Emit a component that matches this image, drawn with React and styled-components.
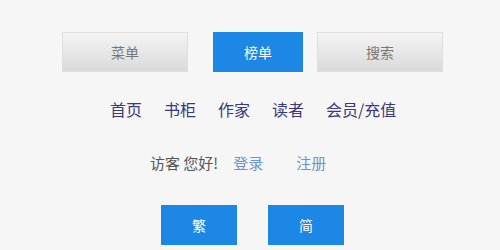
import React from 'react';
import styled, { createGlobalStyle } from 'styled-components';

const GlobalStyle = createGlobalStyle`
  html, body {
    margin: 0;
    padding: 0;
    background: #f6f6f6;
  }
  body {
    font-family: 'Noto Sans CJK SC', 'Noto Sans', sans-serif;
  }
`;

const Page = styled.div`
  width: 500px;
  height: 250px;
  overflow: hidden;
  background: #f6f6f6;
  display: flex;
  flex-direction: column;
`;

const TopBar = styled.div`
  display: flex;
  padding: 32px 0 0 62px;
  height: 40px;
`;

const TabButton = styled.div`
  box-sizing: border-box;
  width: ${({ $w }) => $w}px;
  height: 40px;
  margin-right: ${({ $gap }) => $gap || 0}px;
  display: flex;
  align-items: center;
  justify-content: center;
  font-size: 14px;
  color: ${({ $active }) => ($active ? '#ffffff' : '#777777')};
  background: ${({ $active }) =>
    $active ? '#1d87e6' : 'linear-gradient(#f4f4f4, #dadada)'};
  border: 1px solid ${({ $active }) => ($active ? '#1d87e6' : '#dedede')};
`;

const Nav = styled.nav`
  display: flex;
  gap: 22px;
  padding: 26px 0 0 110px;
  height: 22px;
  align-items: center;
`;

const NavLink = styled.a`
  font-size: 16px;
  color: #38387e;
  text-decoration: none;
  line-height: 22px;
`;

const UserRow = styled.div`
  display: flex;
  align-items: center;
  padding: 31px 0 0 150px;
  height: 22px;
  font-size: 15px;
  color: #555555;
`;

const Greeting = styled.span`
  margin-right: 15px;
`;

const UserLink = styled.a`
  color: #6a94cb;
  text-decoration: none;
  margin-right: ${({ $gap }) => $gap || 0}px;
`;

const LangBar = styled.div`
  display: flex;
  gap: 31px;
  padding: 32px 0 0 161px;
`;

const LangButton = styled.div`
  width: 76px;
  height: 40px;
  background: #1d87e6;
  color: #ffffff;
  font-size: 14px;
  display: flex;
  align-items: center;
  justify-content: center;
`;

export default function App() {
  return (
    <>
      <GlobalStyle />
      <Page>
        <TopBar>
          <TabButton $w={126} $gap={25}>菜单</TabButton>
          <TabButton $w={90} $gap={14} $active>榜单</TabButton>
          <TabButton $w={126}>搜索</TabButton>
        </TopBar>
        <Nav>
          <NavLink href="#">首页</NavLink>
          <NavLink href="#">书柜</NavLink>
          <NavLink href="#">作家</NavLink>
          <NavLink href="#">读者</NavLink>
          <NavLink href="#">会员/充值</NavLink>
        </Nav>
        <UserRow>
          <Greeting>访客 您好!</Greeting>
          <UserLink href="#" $gap={33}>登录</UserLink>
          <UserLink href="#">注册</UserLink>
        </UserRow>
        <LangBar>
          <LangButton>繁</LangButton>
          <LangButton>简</LangButton>
        </LangBar>
      </Page>
    </>
  );
}
